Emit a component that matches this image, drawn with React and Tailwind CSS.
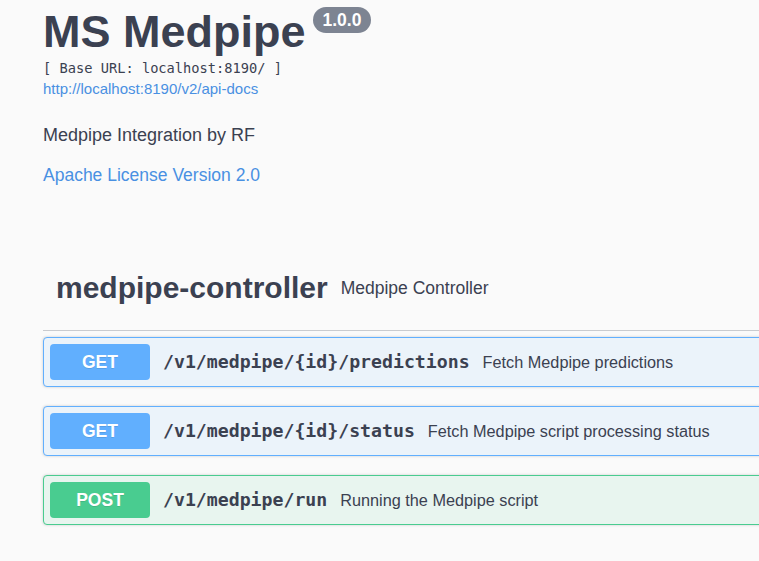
import React from 'react';

const SANS = { fontFamily: '"Liberation Sans", Arial, sans-serif' };

const ops = [
  { method: 'GET', path: '/v1/medpipe/{id}/predictions', summary: 'Fetch Medpipe predictions' },
  { method: 'GET', path: '/v1/medpipe/{id}/status', summary: 'Fetch Medpipe script processing status' },
  { method: 'POST', path: '/v1/medpipe/run', summary: 'Running the Medpipe script' },
];

function OpBlock({ method, path, summary }) {
  const isGet = method === 'GET';
  return (
    <div
      className={`mb-[19px] h-[50px] flex items-center rounded-[4px] border px-[6px] shadow-[0_0_3px_rgba(0,0,0,0.19)] ${
        isGet ? 'border-[#61affe] bg-[#ebf3fa]' : 'border-[#49cc90] bg-[#e8f5ef]'
      }`}
    >
      <span
        className={`w-[100px] h-[36px] flex items-center justify-center rounded-[4px] text-white font-bold text-[17.5px] [text-shadow:0_1px_0_rgba(0,0,0,0.1)] ${
          isGet ? 'bg-[#61affe]' : 'bg-[#49cc90]'
        }`}
      >
        {method}
      </span>
      <span className="ml-[13px] font-['DejaVu_Sans_Mono',monospace] font-bold text-[18.2px] text-[#3b4151]">
        {path}
      </span>
      <span className="ml-[13px] text-[16.25px] text-[#3b4151]">{summary}</span>
    </div>
  );
}

export default function App() {
  return (
    <div className="w-[759px] h-[561px] overflow-hidden bg-[#fafafa]" style={SANS}>
      <div className="w-[800px] pl-[43px]">
        {/* Info */}
        <div className="pt-[9px]">
          <div className="flex items-start">
            <h1 className="text-[45px] leading-none font-bold text-[#3b4151]">MS Medpipe</h1>
            <span className="ml-[7px] mt-[-2px] h-[26px] px-[10px] flex items-center rounded-full bg-[#7d8492] text-white font-bold text-[17.5px]">
              1.0.0
            </span>
          </div>
          <div className="mt-[6px] font-['DejaVu_Sans_Mono',monospace] text-[13.7px] leading-[16px] text-[#3b4151]">
            [ Base URL: localhost:8190/ ]
          </div>
          <a className="block mt-[4px] text-[15px] leading-[18px] text-[#4990e2]">
            http://localhost:8190/v2/api-docs
          </a>
          <p className="mt-[26px] text-[18px] leading-[22px] text-[#3b4151]">Medpipe Integration by RF</p>
          <a className="block mt-[18px] text-[17.5px] leading-[22px] text-[#4990e2]">Apache License Version 2.0</a>
        </div>

        {/* Tag section */}
        <div className="mt-[84px] flex items-center px-[13px] pb-[24px] border-b border-[#c9cbcf]">
          <h3 className="text-[30px] leading-[36px] font-bold text-[#3b4151]">medpipe-controller</h3>
          <span className="ml-[13px] text-[17.5px] text-[#3b4151]">Medpipe Controller</span>
        </div>

        <div className="mt-[6px]">
          {ops.map((op) => (
            <OpBlock key={op.path} {...op} />
          ))}
        </div>
      </div>
    </div>
  );
}
